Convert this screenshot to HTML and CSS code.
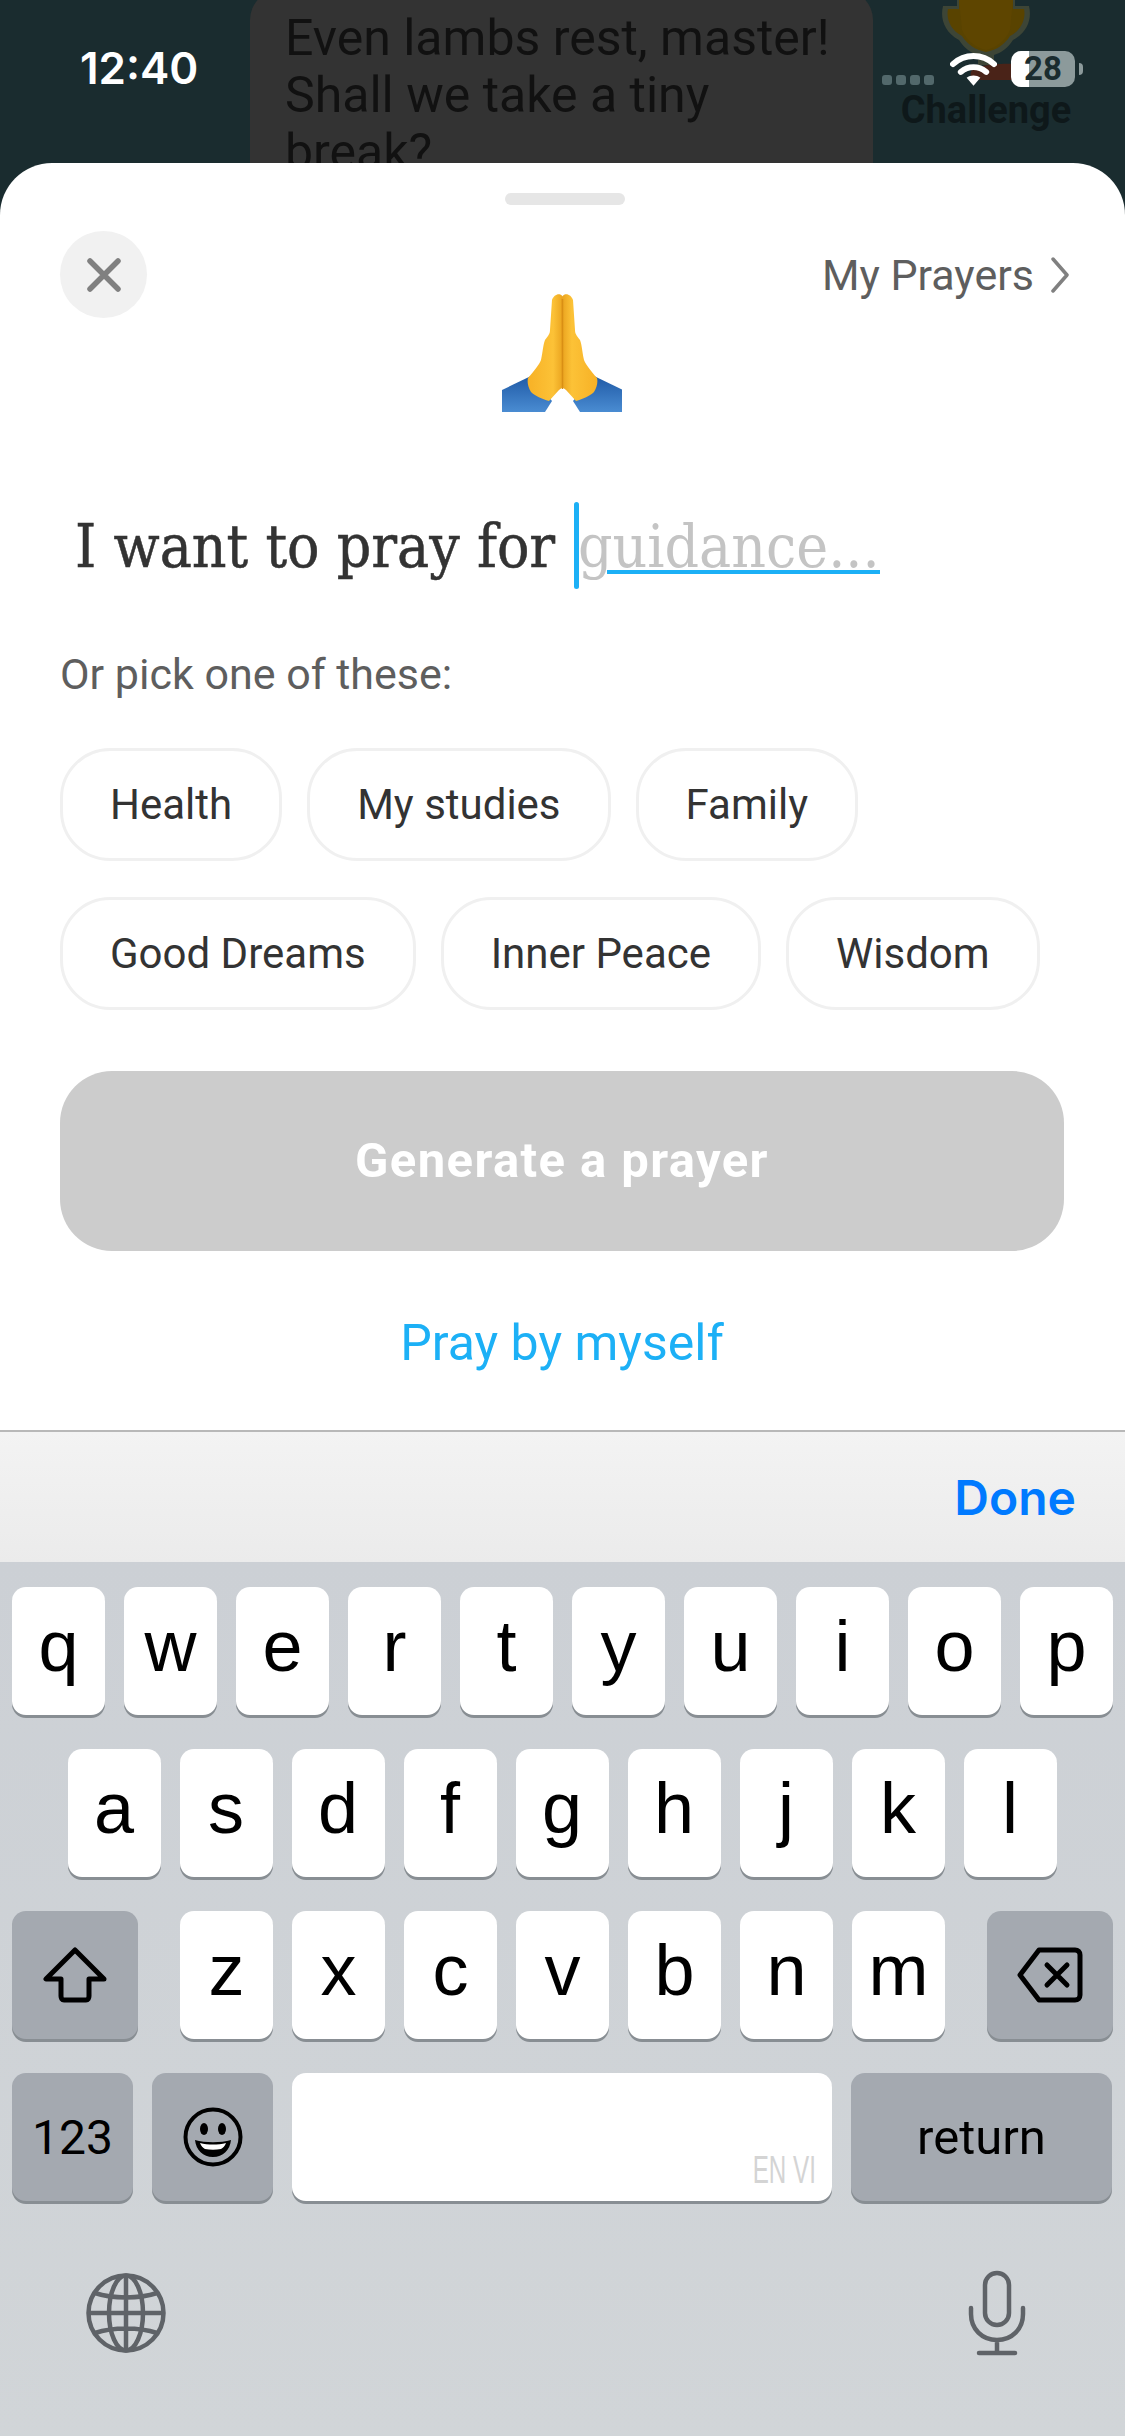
FILE: index.html
```html
<!DOCTYPE html>
<html lang="en">
<head>
    <meta charset="UTF-8">
    <title>Pray</title>
    <link rel="stylesheet" href="styles.css">
</head>
<body>
<div class="phone">
    <div class="backdrop">
        <div class="bubble">Even lambs rest, master! Shall we take a tiny break?</div>
        <div class="challenge">
            <svg class="trophy" viewBox="0 0 94 82">
                <path d="M4 6h14V0h58v6h14c3 12-1 26-16 34-5 8-12 13-19 15v10H39V55c-7-2-14-7-19-15C5 32 1 18 4 6z" fill="#3d4536"/>
                <path d="M9 9h11V0h54v9h11c2 9-2 21-14 27-5 8-13 14-24 16-11-2-19-8-24-16C11 30 7 18 9 9z" fill="#594300"/>
                <path d="M20 0h54l-3 30c-4 10-14 18-24 20-10-2-20-10-24-20z" fill="#5e4500"/>
                <path d="M32 72c2-8 40-10 50-7 9 3 10 14 0 15H38c-6 0-7-4-6-8z" fill="#4a2318"/>
            </svg>
            <div class="challenge-label">Challenge</div>
        </div>
    </div>

    <!-- status bar lies over the app behind the sheet -->
    <div class="status">
        <span class="clock">12:40</span>
        <div class="status-right">
            <span class="dots"><i></i><i></i><i></i><i></i></span>
            <svg class="wifi" viewBox="0 0 48 34">
                <path d="M3 12C15 1 33 1 45 12" fill="none" stroke="#fff" stroke-width="6" stroke-linecap="round"/>
                <path d="M11 20c8-6.500 18-6.500 26 0" fill="none" stroke="#fff" stroke-width="6" stroke-linecap="round"/>
                <path d="M24 34l-7-8c4-3 10-3 14 0z" fill="#fff"/>
            </svg>
            <span class="battery">28</span>
            <span class="battery-nub"></span>
        </div>
    </div>

    <div class="sheet">
        <div class="handle"></div>
        <div class="sheet-head">
            <div class="close">
                <svg viewBox="0 0 34 34" width="34" height="34">
                    <path d="M3 3l28 28M31 3L3 31" stroke="#808080" stroke-width="5.500" stroke-linecap="round"/>
                </svg>
            </div>
            <div class="my-prayers">
                My Prayers
                <svg viewBox="0 0 20 36" width="20" height="36">
                    <path d="M3 2l14 16L3 34" fill="none" stroke="#808080" stroke-width="3.500" stroke-linecap="round" stroke-linejoin="round"/>
                </svg>
            </div>
        </div>

        <svg class="hands" viewBox="0 0 120 119">
            <defs>
                <linearGradient id="skin" x1="0" y1="0" x2="1" y2="0">
                    <stop offset="0" stop-color="#f7b126"/>
                    <stop offset="0.7" stop-color="#fcc237"/>
                    <stop offset="1" stop-color="#e8a01c"/>
                </linearGradient>
                <linearGradient id="sleeve" x1="0" y1="0" x2="0" y2="1">
                    <stop offset="0" stop-color="#1f5aa6"/>
                    <stop offset="1" stop-color="#4a8cd2"/>
                </linearGradient>
                <g id="hand">
                    <path d="M0 97L29 83L50 108L43 119H0z" fill="url(#sleeve)"/>
                    <path d="M50 7C52 1 60 -2 62 7L61 94L57 97L47 108C40 106 33 103 29 99C26 94 25 89 26 85C32 78 37 72 39 67C41 58 41 52 43 47C47 42 48 40 48 37z" fill="url(#skin)"/>
                </g>
            </defs>
            <use href="#hand"/>
            <use href="#hand" transform="translate(121 0) scale(-1 1)"/>
            <path d="M60.500 6V96" stroke="#d98f14" stroke-width="1.500"/>
        </svg>

        <div class="prompt">
            <span class="prompt-text">I want to pray for</span>
            <span class="caret"></span>
            <span class="placeholder">guidance...</span>
        </div>

        <div class="hint">Or pick one of these:</div>

        <div class="chips">
            <div class="chip">Health</div>
            <div class="chip">My studies</div>
            <div class="chip">Family</div>
            <div class="chip">Good Dreams</div>
            <div class="chip">Inner Peace</div>
            <div class="chip">Wisdom</div>
        </div>

        <div class="generate">Generate a prayer</div>
        <div class="by-myself">Pray by myself</div>
    </div>

    <div class="toolbar"><span class="done">Done</span></div>

    <div class="keyboard">
        <div class="row">
            <div class="key">q</div><div class="key">w</div><div class="key">e</div><div class="key">r</div><div class="key">t</div>
            <div class="key">y</div><div class="key">u</div><div class="key">i</div><div class="key">o</div><div class="key">p</div>
        </div>
        <div class="row row-center">
            <div class="key">a</div><div class="key">s</div><div class="key">d</div><div class="key">f</div><div class="key">g</div>
            <div class="key">h</div><div class="key">j</div><div class="key">k</div><div class="key">l</div>
        </div>
        <div class="row">
            <div class="key key-dark key-wide">
                <svg viewBox="0 0 64 56" width="64" height="56">
                    <path d="M32 3L3 32h15v17c0 2 1 4 3 4h22c2 0 3-2 3-4V32h15z" fill="none" stroke="#000" stroke-width="5" stroke-linejoin="round"/>
                </svg>
            </div>
            <div class="key row-first">z</div><div class="key">x</div><div class="key">c</div><div class="key">v</div>
            <div class="key">b</div><div class="key">n</div><div class="key row-last">m</div>
            <div class="key key-dark key-wide">
                <svg viewBox="0 0 66 56" width="66" height="56">
                    <path d="M22 3h36c3 0 5 2 5 5v40c0 3-2 5-5 5H22L3 28z" fill="none" stroke="#000" stroke-width="5" stroke-linejoin="round"/>
                    <path d="M30 18l20 20M50 18L30 38" stroke="#000" stroke-width="5" stroke-linecap="round"/>
                </svg>
            </div>
        </div>
        <div class="row">
            <div class="key key-dark key-num">123</div>
            <div class="key key-dark key-emoji">
                <svg viewBox="0 0 60 60" width="60" height="60">
                    <circle cx="30" cy="30" r="27.500" fill="none" stroke="#000" stroke-width="4"/>
                    <ellipse cx="21" cy="22" rx="4" ry="6"/>
                    <ellipse cx="39" cy="22" rx="4" ry="6"/>
                    <path d="M12 33c10 3 26 3 36 0-1 10-8 17-18 17s-17-7-18-17z" fill="#000"/>
                    <path d="M17 36c8 2 18 2 26 0-1 3-3 5-5 6-5 1-11 1-16 0-2-1-4-3-5-6z" fill="#fff"/>
                </svg>
            </div>
            <div class="key key-space"><span class="lang">EN VI</span></div>
            <div class="key key-dark key-return">return</div>
        </div>
        <div class="kb-bottom">
            <svg viewBox="0 0 80 80" width="80" height="80" fill="none" stroke="#5f6368" stroke-width="4.500">
                <circle cx="40" cy="40" r="37.500"/>
                <ellipse cx="40" cy="40" rx="17" ry="37.500"/>
                <path d="M40 2v76M3 40h74M9 20c18 6 44 6 62 0M9 60c18-6 44-6 62 0"/>
            </svg>
            <svg viewBox="0 0 58 86" width="58" height="86" fill="none" stroke="#5f6368" stroke-width="4.500" stroke-linecap="round">
                <rect x="17" y="3" width="24" height="52" rx="12"/>
                <path d="M3 38v6c0 15 11 26 26 26s26-11 26-26v-6M29 70v13M11 83h36"/>
            </svg>
        </div>
    </div>
</div>
</body>
</html>
```

FILE: styles.css
```css
* {
    margin: 0;
    padding: 0;
    box-sizing: border-box;
}

body {
    font-family: Roboto, 'Noto Sans', sans-serif;
    color: #333;
    background: #fff;
}

.phone {
    position: relative;
    width: 1125px;
    height: 2436px;
    overflow: hidden;
    display: flex;
    flex-direction: column;
}

/* runs under the sheet so its round corners show the app behind */
.backdrop {
    height: 220px;
    margin-bottom: -57px;
    flex-shrink: 0;
    overflow: hidden;
    background: #1a2c2f;
    display: flex;
    padding-left: 250px;
}

.bubble {
    width: 623px;
    height: 260px;
    margin-top: -10px;
    padding: 20px 35px;
    background: #333;
    border-radius: 30px;
    font-size: 50px;
    line-height: 57px;
    color: #111;
}

.challenge {
    width: 226px;
    display: flex;
    flex-direction: column;
    align-items: center;
}

.trophy {
    width: 94px;
    height: 82px;
    margin-top: 0;
}

.challenge-label {
    margin-top: 6px;
    font-size: 38px;
    font-weight: 700;
    color: #0e181a;
}

.status {
    position: absolute;
    top: 0;
    left: 0;
    width: 100%;
    height: 120px;
}

.clock {
    position: absolute;
    left: 80px;
    top: 42px;
    font-family: Inter, sans-serif;
    font-size: 44px;
    font-weight: 600;
    line-height: 52px;
    color: #fff;
}

.status-right {
    position: absolute;
    left: 882px;
    top: 51px;
    display: flex;
}

.dots {
    display: flex;
    gap: 4px;
    margin-top: 24px;
    height: 10px;
}

.dots i {
    width: 10px;
    height: 10px;
    border-radius: 3px;
    background: #52686b;
}

.wifi {
    width: 47px;
    height: 34px;
    margin-left: 16px;
    margin-top: 1px;
}

.battery {
    width: 64px;
    height: 36px;
    margin-left: 14px;
    border-radius: 10px;
    background: linear-gradient(90deg, #fff 0 28%, #8c9a9b 28% 100%);
    color: #1a2c2f;
    font-size: 33px;
    font-weight: 700;
    line-height: 36px;
    text-align: center;
}

.battery-nub {
    width: 4px;
    height: 12px;
    margin: 12px 0 0 4px;
    border-radius: 0 4px 4px 0;
    background: #8c9a9b;
}

.sheet {
    flex: 1;
    background: #fff;
    border-radius: 52px 52px 0 0;
    padding: 0 55px 0 60px;
    display: flex;
    flex-direction: column;
    position: relative;
}

.handle {
    width: 120px;
    height: 12px;
    margin: 30px auto 0;
    border-radius: 6px;
    background: #e6e6e6;
}

.sheet-head {
    margin-top: 26px;
    display: flex;
    justify-content: space-between;
    align-items: flex-start;
}

.close {
    width: 87px;
    height: 87px;
    border-radius: 50%;
    background: #f1f1f1;
    display: flex;
    align-items: center;
    justify-content: center;
}

.my-prayers {
    height: 87px;
    display: flex;
    align-items: center;
    gap: 16px;
    font-size: 43px;
    color: #5e5e5e;
}

.hands {
    display: block;
    width: 120px;
    height: 119px;
    margin: -25px 0 0 442px;
}

.prompt {
    margin-top: 90px;
    height: 87px;
    padding-left: 15px;
    display: flex;
    align-items: center;
    font-family: 'DejaVu Serif Condensed', 'DejaVu Serif', serif;
    font-size: 60px;
    color: #333;
}

.prompt-text {
    width: 499px;
    white-space: nowrap;
    -webkit-text-stroke: 0.5px #333;
}

.caret {
    width: 5px;
    height: 87px;
    border-radius: 3px;
    background: #1cb0f6;
    flex-shrink: 0;
}

.placeholder {
    position: relative;
    margin-left: -1px;
    color: #c4c4c4;
    white-space: nowrap;
}

.placeholder::after {
    content: "";
    position: absolute;
    left: 29px;
    right: 0;
    bottom: 7px;
    height: 4px;
    background: #1cb0f6;
}

.hint {
    margin-top: 61px;
    font-size: 43px;
    line-height: 48px;
    color: #5e5e5e;
}

.chips {
    margin-top: 50px;
    display: flex;
    flex-wrap: wrap;
    gap: 36px 25px;
    width: 1000px;
}

.chip {
    height: 113px;
    padding: 0 47px;
    border: 3px solid #f0f0f0;
    border-radius: 50px;
    font-size: 42px;
    line-height: 107px;
    color: #333;
}

.generate {
    margin-top: 61px;
    width: 1004px;
    height: 180px;
    border-radius: 52px;
    background: #ccc;
    color: #fff;
    font-size: 49px;
    font-weight: 700;
    letter-spacing: 1.400px;
    line-height: 180px;
    text-align: center;
}

.by-myself {
    margin-top: 62px;
    width: 1004px;
    font-size: 50px;
    line-height: 60px;
    text-align: center;
    color: #1cb0f6;
}

.toolbar {
    height: 132px;
    flex-shrink: 0;
    border-top: 2px solid #b8b8b8;
    background: linear-gradient(#f3f3f3, #ebebeb);
    display: flex;
    justify-content: flex-end;
    align-items: center;
    padding-right: 49px;
}

.done {
    font-family: Inter, sans-serif;
    font-size: 48px;
    font-weight: 600;
    color: #007aff;
}

.keyboard {
    height: 874px;
    flex-shrink: 0;
    background: linear-gradient(#ccd0d5, #d1d5d8);
    padding: 25px 13px 0 12px;
    display: flex;
    flex-direction: column;
    gap: 34px;
}

.row {
    display: flex;
    gap: 19px;
}

.row-center {
    justify-content: center;
}

.key {
    width: 93px;
    height: 128px;
    flex-shrink: 0;
    border-radius: 14px;
    background: #fff;
    box-shadow: 0 3px 0 #888e93;
    font-family: 'Liberation Sans', Arial, sans-serif;
    font-size: 72px;
    color: #000;
    display: flex;
    align-items: center;
    justify-content: center;
    padding-bottom: 10px;
}

.key-dark {
    background: #a4a9b0;
}

.key-wide {
    width: 126px;
    padding-bottom: 0;
}

.row-first {
    margin-left: 23px;
}

.row-last {
    margin-right: 23px;
}

.key-num {
    width: 121px;
    font-family: Roboto, sans-serif;
    font-size: 48px;
    padding-bottom: 0;
}

.key-emoji {
    width: 121px;
    padding-bottom: 0;
}

.key-space {
    width: 540px;
    align-items: flex-end;
    justify-content: flex-end;
    padding: 0 16px 9px 0;
}

.lang {
    font-family: 'Liberation Sans', sans-serif;
    font-size: 39px;
    color: #d4d4d4;
    transform: scaleX(0.62);
    transform-origin: right bottom;
}

.key-return {
    width: 261px;
    font-family: Roboto, sans-serif;
    font-size: 49px;
    padding-bottom: 0;
}

.kb-bottom {
    margin-top: 35px;
    padding: 0 86px 0 74px;
    display: flex;
    justify-content: space-between;
    align-items: center;
}
```
